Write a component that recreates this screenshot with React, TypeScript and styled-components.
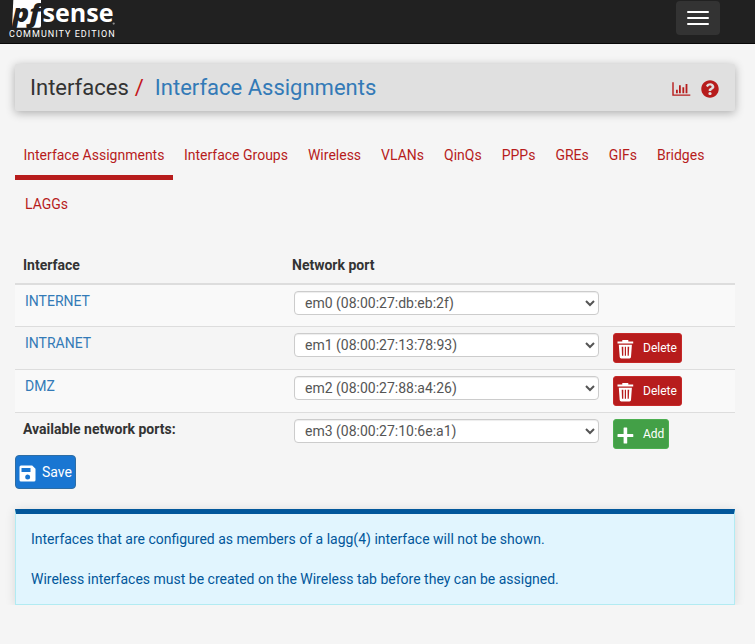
import React from "react";
import styled, { createGlobalStyle } from "styled-components";
import { FaQuestionCircle } from "react-icons/fa";

const GlobalStyle = createGlobalStyle`
  *, *::before, *::after { box-sizing: border-box; }
  html { background: #f5f5f5; }
  body {
    margin: 0;
    background: #f5f5f5;
    color: #333;
    font: 14px/20px Roboto, "Liberation Sans", sans-serif;
    overflow: hidden;
  }
  a { text-decoration: none; }
`;

const Navbar = styled.header`
  display: flex;
  justify-content: space-between;
  align-items: flex-start;
  height: 44px;
  padding: 0 35px 0 9px;
  background: #212121;
  border-bottom: 1px solid #080808;
`;

const Brand = styled.a`
  display: flex;
  flex-direction: column;
  color: #fff;
  svg { display: block; }
`;

const Edition = styled.span`
  font-size: 9px;
  line-height: 12px;
  letter-spacing: 1.03px;
  white-space: nowrap;
`;

const MenuButton = styled.button`
  display: flex;
  flex-direction: column;
  justify-content: center;
  align-items: center;
  gap: 4px;
  width: 44px;
  height: 34px;
  margin-top: 1px;
  padding: 0;
  background: #333;
  border: 0;
  border-radius: 4px;
`;

const MenuLine = styled.span`
  width: 22px;
  height: 2px;
  border-radius: 1px;
  background: #fff;
`;

const Main = styled.main`
  padding: 20px 20px 0 15px;
`;

const TitleBar = styled.div`
  display: flex;
  justify-content: space-between;
  align-items: center;
  height: 47px;
  padding: 0 16px 0 15px;
  background: #e0e0e0;
  border-radius: 2px;
  box-shadow: 0 2px 10px rgba(0, 0, 0, 0.3);
`;

const Breadcrumb = styled.h1`
  display: flex;
  margin: 0;
  font-size: 22px;
  font-weight: 400;
  line-height: 24px;
  color: #333;
  white-space: pre;
`;

const Slash = styled.span`
  margin: 0 11px 0 6px;
  color: #c4161c;
`;

const TitleLink = styled.a`
  color: #337ab7;
`;

const TitleIcons = styled.div`
  display: flex;
  align-items: center;
  gap: 10px;
  padding-top: 2px;
  color: #b71c1c;
`;

const Tabs = styled.nav`
  display: flex;
  flex-wrap: wrap;
  margin-top: 20px;
`;

const Tab = styled.a<{ $active?: boolean }>`
  height: 49px;
  margin-right: ${(p) => (p.$active ? "1px" : "0")};
  padding: ${(p) => (p.$active ? "14px 8.5px 0" : "14px 10px 0")};
  border-bottom: ${(p) => (p.$active ? "5px solid #b71c1c" : "0")};
  color: #b71c1c;
`;

const Table = styled.table`
  width: 720px;
  margin-top: 18px;
  border-collapse: separate;
  border-spacing: 0;
  table-layout: fixed;
`;

const HeadCell = styled.th<{ $width: number }>`
  width: ${(p) => p.$width}px;
  height: 38px;
  padding: 8px 8px 8px;
  border-bottom: 2px solid #ddd;
  line-height: 20px;
  font-weight: 700;
  text-align: left;
`;

const Row = styled.tr<{ $height: number; $striped?: boolean; $first?: boolean }>`
  height: ${(p) => p.$height}px;
  background: ${(p) => (p.$striped ? "#f9f9f9" : "transparent")};
  td { border-top: ${(p) => (p.$first ? "0" : "1px solid #ddd")}; }
`;

const Cell = styled.td<{ $left?: number }>`
  padding: 6px 0 0 ${(p) => p.$left ?? 10}px;
  vertical-align: top;
`;

const InterfaceLink = styled.a`
  color: #337ab7;
`;

const PortSelect = styled.select`
  display: block;
  width: 305px;
  height: 24px;
  padding: 0 6px;
  background-color: #fff;
  border: 1px solid #ccc;
  border-radius: 4px;
  box-shadow: inset 0 1px 1px rgba(0, 0, 0, 0.075);
  color: #555;
  font: 14px/20px Roboto, sans-serif;
`;

const SmallButton = styled.button<{ $tone: "danger" | "success" }>`
  display: flex;
  align-items: center;
  height: 30px;
  padding: 0 4px 0 3px;
  border: 1px solid ${(p) => (p.$tone === "danger" ? "#c62828" : "#4caf50")};
  border-radius: 3px;
  background: ${(p) => (p.$tone === "danger" ? "#b71c1c" : "#43a047")};
  color: #fff;
  font: 12px/18px Roboto, sans-serif;
  svg { flex: none; margin: 3px 9px 0 0; }
`;

const SaveButton = styled.button`
  display: flex;
  align-items: center;
  width: 61px;
  height: 34px;
  padding: 0 0 0 3px;
  border: 1px solid #2e6da4;
  border-radius: 4px;
  background: #1976d2;
  color: #fff;
  font: 14px/20px Roboto, sans-serif;
  svg { flex: none; margin: 3px 6px 0 0; }
`;

const InfoBox = styled.section`
  width: 720px;
  height: 96px;
  margin-top: 20px;
  padding: 15px;
  border: 1px solid #b2ebf2;
  border-top: 5px solid #01579b;
  background: #e1f5fe;
  box-shadow: 0 1px 10px rgba(0, 0, 0, 0.12);
  color: #01579b;
  p { margin: 0 0 20px; }
`;

const Logo = () => (
  <svg width="108" height="28" viewBox="0 0 108 28" fill="#fff">
    <path d="M4.3 0H32V25.7Q32 27.7 30 27.7H3Z" />
    <text x="3.6" y="21.8" fill="#212121" fontFamily="Open Sans" fontSize="25" fontWeight="800" fontStyle="italic" textLength="28" lengthAdjust="spacingAndGlyphs">pf</text>
    <text x="33.6" y="21.8" fontFamily="Open Sans" fontSize="24.5" fontWeight="700" textLength="71" lengthAdjust="spacingAndGlyphs">sense</text>
    <circle cx="104.7" cy="23.6" r="1.1" fill="#888" />
  </svg>
);

const ChartIcon = () => (
  <svg width="19" height="14" viewBox="0 0 19 14" fill="currentColor">
    <path d="M.3.2h1.4v12.2h16.6v1.3H.3z" />
    <path d="M4 7.7h1.8v3.5H4zM7 3.2h1.8v8H7zM10.4 5.2h1.8v6h-1.8zM13.6 2h1.8v9.2h-1.8z" />
  </svg>
);

const TrashIcon = () => (
  <svg width="17" height="19" viewBox="0 0 17 19" fill="#fff">
    <path d="M5.3 0h6v1.5h4.9v2H.5v-2h4.8z" />
    <path fillRule="evenodd" d="M1.8 4.8h13.1L14 17.1q-.1 1.4-1.5 1.4H4.2q-1.4 0-1.5-1.4zM4.7 6.7l.3 9h1.3V6.7zM7.8 6.7v9h1.2v-9zM10.6 6.7v9h1.2l.4-9z" />
  </svg>
);

const PlusIcon = () => (
  <svg width="17" height="17" viewBox="0 0 17 17" fill="#fff">
    <path d="M7.2.5h2.4q.6 0 .6.6v5.8h5.5q.6 0 .6.6v2q0 .6-.6.6h-5.5v5.8q0 .6-.6.6H7.2q-.6 0-.6-.6v-5.8H1.1q-.6 0-.6-.6v-2q0-.6.6-.6h5.5V1.1q0-.6.6-.6z" />
  </svg>
);

const SaveIcon = () => (
  <svg width="17" height="17" viewBox="0 0 17 17" fill="#fff">
    <path fillRule="evenodd" d="M2 .5h11.2l3.3 3.2V15q0 1.5-1.5 1.5H2Q.5 16.5.5 15V2Q.5.5 2 .5zM2.5 3v4h9V3zM8.7 9.4a2.5 2.5 0 1 0 0 5 2.5 2.5 0 0 0 0-5z" />
  </svg>
);

const tabs = ["Interface Assignments", "Interface Groups", "Wireless", "VLANs", "QinQs", "PPPs", "GREs", "GIFs", "Bridges", "LAGGs"];

const interfaces = [
  { name: "INTERNET", port: "em0 (08:00:27:db:eb:2f)", removable: false },
  { name: "INTRANET", port: "em1 (08:00:27:13:78:93)", removable: true },
  { name: "DMZ", port: "em2 (08:00:27:88:a4:26)", removable: true },
];

export default function App() {
  return (
    <>
      <GlobalStyle />
      <Navbar>
        <Brand>
          <Logo />
          <Edition>COMMUNITY EDITION</Edition>
        </Brand>
        <MenuButton aria-label="Toggle navigation">
          <MenuLine />
          <MenuLine />
          <MenuLine />
        </MenuButton>
      </Navbar>
      <Main>
        <TitleBar>
          <Breadcrumb>
            Interfaces<Slash>/</Slash>
            <TitleLink>Interface Assignments</TitleLink>
          </Breadcrumb>
          <TitleIcons>
            <ChartIcon />
            <FaQuestionCircle size={18} />
          </TitleIcons>
        </TitleBar>
        <Tabs>
          {tabs.map((label, i) => (
            <Tab key={label} $active={i === 0}>{label}</Tab>
          ))}
        </Tabs>
        <Table>
          <thead>
            <tr>
              <HeadCell $width={269}>Interface</HeadCell>
              <HeadCell $width={319}>Network port</HeadCell>
              <HeadCell $width={132} />
            </tr>
          </thead>
          <tbody>
            {interfaces.map((item, i) => (
              <Row key={item.name} $height={i === 0 ? 41 : 43} $striped={i % 2 === 0} $first={i === 0}>
                <Cell><InterfaceLink>{item.name}</InterfaceLink></Cell>
                <Cell>
                  <PortSelect><option>{item.port}</option></PortSelect>
                </Cell>
                <Cell>
                  {item.removable && (
                    <SmallButton $tone="danger"><TrashIcon />Delete</SmallButton>
                  )}
                </Cell>
              </Row>
            ))}
            <Row $height={43}>
              <Cell $left={8}><b>Available network ports:</b></Cell>
              <Cell>
                <PortSelect><option>em3 (08:00:27:10:6e:a1)</option></PortSelect>
              </Cell>
              <Cell>
                <SmallButton $tone="success"><PlusIcon />Add</SmallButton>
              </Cell>
            </Row>
          </tbody>
        </Table>
        <SaveButton><SaveIcon />Save</SaveButton>
        <InfoBox>
          <p>Interfaces that are configured as members of a lagg(4) interface will not be shown.</p>
          <p>Wireless interfaces must be created on the Wireless tab before they can be assigned.</p>
        </InfoBox>
      </Main>
    </>
  );
}
